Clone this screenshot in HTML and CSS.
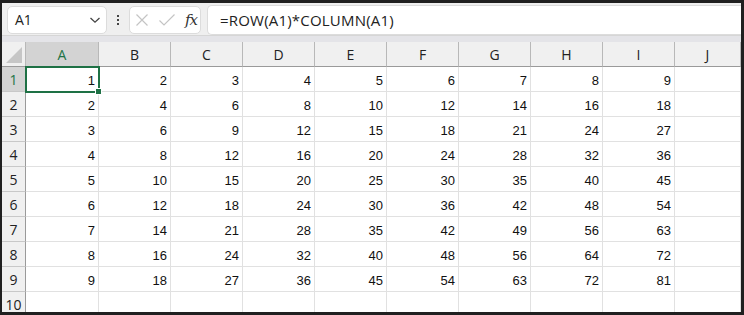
FILE: index.html
```html
<!DOCTYPE html>
<html lang="en">
<head>
    <meta charset="UTF-8">
    <title>Sheet</title>
    <link rel="stylesheet" href="styles.css">
</head>
<body>
    <div class="app">
        <!-- Formula bar -->
        <div class="formula-bar">
            <div class="name-box">
                <span>A1</span>
                <svg class="chev" width="12" height="8" viewBox="0 0 12 8"><path d="M1.5 2 L6 6.2 L10.5 2" fill="none" stroke="#444" stroke-width="1.3"/></svg>
            </div>
            <div class="dots"><i></i><i></i><i></i></div>
            <div class="fx-box">
                <svg width="14" height="14" viewBox="0 0 14 14"><path d="M1.5 1.5 L12.5 12.5 M12.5 1.5 L1.5 12.5" stroke="#c4c4c4" stroke-width="1.2"/></svg>
                <svg width="18" height="14" viewBox="0 0 18 14"><path d="M1.5 7.5 L6 12 L16.5 1.5" fill="none" stroke="#c4c4c4" stroke-width="1.2"/></svg>
                <span class="fx">fx</span>
            </div>
            <div class="formula">=ROW(A1)*COLUMN(A1)</div>
        </div>
        <div class="band"></div>

        <!-- Grid -->
        <div class="grid">
            <div class="corner"></div>
            <div class="col-hdr sel">A</div>
            <div class="col-hdr">B</div>
            <div class="col-hdr">C</div>
            <div class="col-hdr">D</div>
            <div class="col-hdr">E</div>
            <div class="col-hdr">F</div>
            <div class="col-hdr">G</div>
            <div class="col-hdr">H</div>
            <div class="col-hdr">I</div>
            <div class="col-hdr">J</div>

            <div class="row-hdr sel">1</div>
            <div class="cell active">1<span class="handle"></span></div><div class="cell">2</div><div class="cell">3</div><div class="cell">4</div><div class="cell">5</div><div class="cell">6</div><div class="cell">7</div><div class="cell">8</div><div class="cell">9</div><div class="cell"></div>

            <div class="row-hdr">2</div>
            <div class="cell">2</div><div class="cell">4</div><div class="cell">6</div><div class="cell">8</div><div class="cell">10</div><div class="cell">12</div><div class="cell">14</div><div class="cell">16</div><div class="cell">18</div><div class="cell"></div>

            <div class="row-hdr">3</div>
            <div class="cell">3</div><div class="cell">6</div><div class="cell">9</div><div class="cell">12</div><div class="cell">15</div><div class="cell">18</div><div class="cell">21</div><div class="cell">24</div><div class="cell">27</div><div class="cell"></div>

            <div class="row-hdr">4</div>
            <div class="cell">4</div><div class="cell">8</div><div class="cell">12</div><div class="cell">16</div><div class="cell">20</div><div class="cell">24</div><div class="cell">28</div><div class="cell">32</div><div class="cell">36</div><div class="cell"></div>

            <div class="row-hdr">5</div>
            <div class="cell">5</div><div class="cell">10</div><div class="cell">15</div><div class="cell">20</div><div class="cell">25</div><div class="cell">30</div><div class="cell">35</div><div class="cell">40</div><div class="cell">45</div><div class="cell"></div>

            <div class="row-hdr">6</div>
            <div class="cell">6</div><div class="cell">12</div><div class="cell">18</div><div class="cell">24</div><div class="cell">30</div><div class="cell">36</div><div class="cell">42</div><div class="cell">48</div><div class="cell">54</div><div class="cell"></div>

            <div class="row-hdr">7</div>
            <div class="cell">7</div><div class="cell">14</div><div class="cell">21</div><div class="cell">28</div><div class="cell">35</div><div class="cell">42</div><div class="cell">49</div><div class="cell">56</div><div class="cell">63</div><div class="cell"></div>

            <div class="row-hdr">8</div>
            <div class="cell">8</div><div class="cell">16</div><div class="cell">24</div><div class="cell">32</div><div class="cell">40</div><div class="cell">48</div><div class="cell">56</div><div class="cell">64</div><div class="cell">72</div><div class="cell"></div>

            <div class="row-hdr">9</div>
            <div class="cell">9</div><div class="cell">18</div><div class="cell">27</div><div class="cell">36</div><div class="cell">45</div><div class="cell">54</div><div class="cell">63</div><div class="cell">72</div><div class="cell">81</div><div class="cell"></div>

            <div class="row-hdr">10</div>
            <div class="cell"></div><div class="cell"></div><div class="cell"></div><div class="cell"></div><div class="cell"></div><div class="cell"></div><div class="cell"></div><div class="cell"></div><div class="cell"></div><div class="cell"></div>
        </div>
    </div>
</body>
</html>
```

FILE: styles.css
```css
/* ===== Window ===== */
body {
    margin: 0;
    background: #202020;
    height: 315px;
    overflow: hidden;
    font-family: "Open Sans", "Noto Sans", Arial, sans-serif;
}

.app {
    margin: 3px 3px 0 2px;
    height: 309px;
    background: #ffffff;
    overflow: hidden;
}

/* ===== Formula bar ===== */
.formula-bar {
    display: flex;
    align-items: center;
    height: 31px;
    padding-top: 1px;
    background: #efefef;
    border-bottom: 1px solid #d6d6d6;
}

.name-box {
    display: flex;
    align-items: center;
    justify-content: space-between;
    box-sizing: border-box;
    width: 100px;
    height: 28px;
    margin-left: 5px;
    padding: 0 5px 0 7px;
    background: #fff;
    border: 1px solid #dcdcdc;
    border-radius: 5px;
    font-size: 14px;
    color: #222;
}

.dots {
    display: flex;
    flex-direction: column;
    gap: 2px;
    width: 22px;
    align-items: center;
}

.dots i {
    width: 2px;
    height: 2px;
    background: #444;
}

.fx-box {
    display: flex;
    align-items: center;
    gap: 9px;
    box-sizing: border-box;
    width: 72px;
    height: 28px;
    padding-left: 5px;
    background: #fff;
    border: 1px solid #dcdcdc;
    border-radius: 5px;
}

.fx {
    font-family: "DejaVu Serif", "Liberation Serif", serif;
    font-style: italic;
    font-size: 15px;
    color: #333;
    letter-spacing: -1px;
}

.formula {
    flex: 1;
    box-sizing: border-box;
    height: 30px;
    margin-left: 6px;
    padding-left: 12px;
    line-height: 29px;
    background: #fff;
    border: 1px solid #dcdcdc;
    border-right: none;
    border-radius: 5px 0 0 5px;
    font-size: 15px;
    letter-spacing: 0.2px;
    color: #222;
}

.band {
    height: 6px;
    background: #e4e4e8;
}

/* ===== Grid ===== */
.grid {
    display: grid;
    grid-template-columns: 24px 73px repeat(8, 72px) 1fr;
    grid-auto-rows: 25px;
}

.corner {
    position: relative;
    background: #f0f0f0;
    border-right: 1px solid #b8b8b8;
    border-bottom: 1px solid #9a9a9a;
}

.corner::after {
    content: "";
    position: absolute;
    right: 3px;
    bottom: 3px;
    border-left: 16px solid transparent;
    border-bottom: 16px solid #c6c6c6;
}

.col-hdr,
.row-hdr {
    display: flex;
    align-items: center;
    justify-content: center;
    background: #f0f0f0;
    font-size: 14px;
    color: #222;
}

.col-hdr {
    border-right: 1px solid #b8b8b8;
    border-bottom: 1px solid #9a9a9a;
}

.row-hdr {
    border-right: 1px solid #9a9a9a;
    border-bottom: 1px solid #c8c8c8;
}

.col-hdr.sel,
.row-hdr.sel {
    background: #d3d3d3;
    color: #217346;
}

.cell {
    position: relative;
    box-sizing: border-box;
    padding: 6px 3px 0 0;
    text-align: right;
    border-right: 1px solid #e1e1e1;
    border-bottom: 1px solid #e1e1e1;
    font-family: "Liberation Sans", Arial, sans-serif;
    font-size: 13px;
    color: #111;
}

.cell.active {
    outline: 2px solid #1e7145;
    outline-offset: -1px;
    z-index: 1;
}

.handle {
    position: absolute;
    right: -4px;
    bottom: -4px;
    width: 5px;
    height: 5px;
    background: #1e7145;
    border: 1px solid #fff;
}
```
